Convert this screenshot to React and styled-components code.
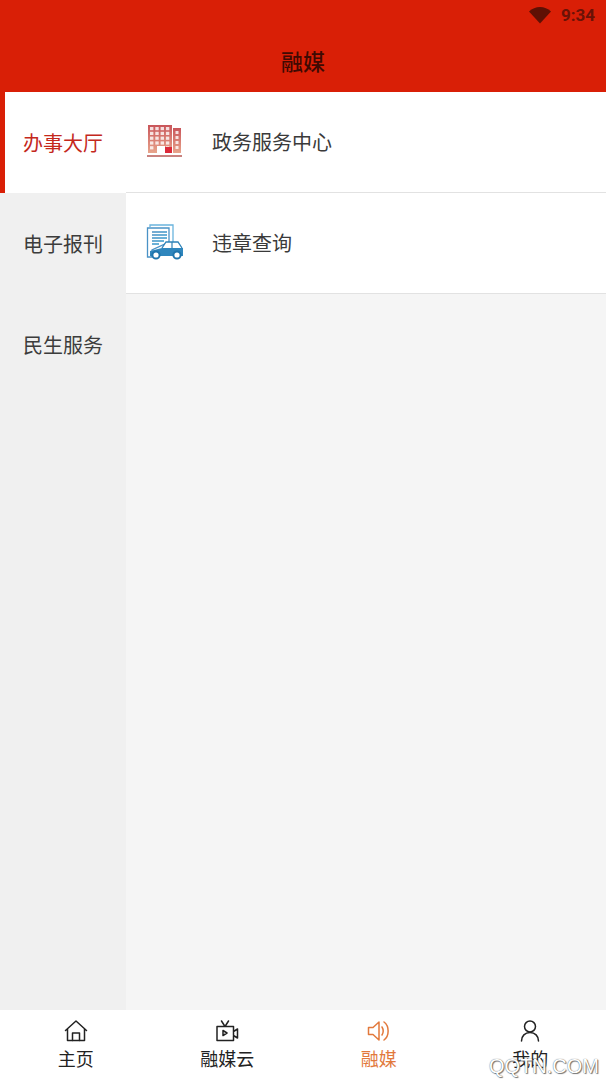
import React from "react";
import styled, { createGlobalStyle } from "styled-components";

const Global = createGlobalStyle`
  html, body { margin: 0; padding: 0; background: #f5f5f5; }
  body { font-family: "Liberation Sans", "Noto Sans CJK SC", sans-serif; }
`;
const Page = styled.div`
  position: relative; width: 606px; height: 1080px; display: flex; flex-direction: column; overflow: hidden;
`;
const Header = styled.header`
  height: 92px; flex: none; background: #d91f06; box-sizing: border-box;
  display: flex; flex-direction: column;
`;
const StatusBar = styled.div`
  height: 30px; display: flex; justify-content: flex-end; align-items: center; gap: 9px; padding-right: 11px;
  color: #6b1206; font-size: 17px; font-weight: 700; font-family: "Roboto", sans-serif;
`;
const Title = styled.h1`
  margin: 0; height: 60px; display: flex; align-items: center; justify-content: center;
  font-size: 22px; font-weight: 500; color: #3f0a03;
`;
const Body = styled.main`flex: 1; display: flex; min-height: 0;`;
const Side = styled.nav`width: 126px; flex: none; background: #f0f0f0; display: flex; flex-direction: column;`;
const SideItem = styled.div`
  height: 101px; box-sizing: border-box; display: flex; align-items: center; padding-left: ${p => p.$active ? "18px" : "23px"}; padding-bottom: 1px;
  font-size: 20px; color: ${p => p.$active ? "#c4281c" : "#3c3c3c"};
  background: ${p => p.$active ? "#fff" : "transparent"};
  border-left: ${p => p.$active ? "5px solid #d91f06" : "0"};
`;
const List = styled.section`flex: 1; background: #f5f5f5; display: flex; flex-direction: column;`;
const Row = styled.div`
  height: 101px; box-sizing: border-box; background: #fff; border-bottom: 1px solid #e2e2e2;
  display: flex; align-items: center; gap: 27px; padding-left: 20px; padding-bottom: 1px; font-size: 20px; color: #3a3a3a;
`;
const RowIcon = styled.svg`width: 39px; height: 40px; flex: none;`;
const TabBar = styled.footer`height: 70px; flex: none; background: #fff; display: grid; grid-template-columns: repeat(4, 1fr);`;
const Tab = styled.div`
  display: flex; flex-direction: column; align-items: center; padding-top: 9px; box-sizing: border-box;
  color: ${p => p.$active ? "#e2793c" : "#222"}; font-size: 18px; line-height: 24px; gap: 5px;
`;
const TabIcon = styled.svg`
  width: 24px; height: 24px; fill: none; stroke: currentColor; stroke-width: 1.5; stroke-linejoin: round; stroke-linecap: round;
`;
const Watermark = styled.div`
  position: absolute; right: 7px; bottom: 2px; font-family: "Liberation Sans", sans-serif; font-size: 20px; letter-spacing: 0;
  color: #fff; text-shadow: 0 0 1px #444, 1px 1px 1px #777; pointer-events: none;
`;

const Building = () => (
  <RowIcon viewBox="0 0 39 40">
    <defs>
      <linearGradient id="bg" x1="0" y1="0" x2="0" y2="1">
        <stop offset="0" stopColor="#c9555a" /><stop offset="1" stopColor="#e8a58c" />
      </linearGradient>
    </defs>
    <rect x="2" y="3" width="24" height="28" fill="url(#bg)" />
    <rect x="27" y="6" width="8" height="25" fill="url(#bg)" />
    {[0, 1, 2, 3, 4].map(r => [0, 1, 2, 3].map(c => (
      (r < 4 || c === 0 || c === 3) && <rect key={r + "-" + c} x={4 + c * 5.3} y={5 + r * 4.8} width="3.4" height="3.2" fill="#fff" fillOpacity=".8" />
    )))}
    {[0, 1, 2, 3].map(r => <rect key={r} x="29.500" y={9 + r * 5} width="3" height="3" fill="#fff" fillOpacity=".8" />)}
    <path d="M11 31v-7h8v7z" fill="#fff" />
    <rect x="19" y="25" width="7" height="6" fill="#dc2a3a" />
    <rect x="1" y="33" width="35" height="2" fill="#c9827f" />
  </RowIcon>
);
const CarDoc = () => (
  <RowIcon viewBox="0 0 39 40">
    <defs>
      <linearGradient id="cg" x1="0" y1="0" x2="1" y2="1">
        <stop offset="0" stopColor="#4a8fc2" /><stop offset="1" stopColor="#2e9ccf" />
      </linearGradient>
    </defs>
    <path d="M4 4V2h23v17" fill="none" stroke="#6ab4dd" strokeWidth="1.3" />
    <path d="M1.500 5H23v14l-17 8v7H1.500z" fill="#fff" stroke="#4a92c6" strokeWidth="1.3" />
    <path d="M6 9h15M6 12h15M6 15h15M6 18h12M6 21h7" stroke="url(#cg)" strokeWidth="1.7" />
    <path d="M16 25l4-6h12l4 6" fill="#fff" stroke="#2f83b8" strokeWidth="1.3" />
    <path d="M26 19v6" stroke="#2f83b8" strokeWidth="1.2" />
    <path d="M4 33v-5l12-3h21v8z" fill="#2f86bd" />
    <circle cx="10" cy="32" r="3.6" fill="#fff" stroke="#1f75ad" strokeWidth="2" />
    <circle cx="31" cy="32" r="3.6" fill="#fff" stroke="#1f75ad" strokeWidth="2" />
  </RowIcon>
);

export default function App() {
  return (
    <Page>
      <Global />
      <Header>
        <StatusBar>
          <svg width="24" height="18" viewBox="0 0 24 18"><path d="M1 5.500C4 2.500 8 1 12 1s8 1.500 11 4.500L12 17.500z" fill="#5e1004" /></svg>
          <span>9:34</span>
        </StatusBar>
        <Title>融媒</Title>
      </Header>
      <Body>
        <Side>
          <SideItem $active>办事大厅</SideItem>
          <SideItem>电子报刊</SideItem>
          <SideItem>民生服务</SideItem>
        </Side>
        <List>
          <Row><Building />政务服务中心</Row>
          <Row><CarDoc />违章查询</Row>
        </List>
      </Body>
      <TabBar>
        <Tab>
          <TabIcon viewBox="0 0 24 24"><path d="M1.500 11.500 12 2l10.500 9.500M3.500 10v11.500h17V10" /><path d="M8.500 21.500v-7.500h7v7.500" /></TabIcon>
          主页
        </Tab>
        <Tab>
          <TabIcon viewBox="0 0 24 24"><path d="M2 7.500h16.500v14H2zM18.500 12.500l4-2.500v9l-4-2.500M6.500 2l3.500 5.500L13.500 2" /><path d="M8 11.500l4 2.500-4 2.500z" /></TabIcon>
          融媒云
        </Tab>
        <Tab $active>
          <TabIcon viewBox="0 0 24 24"><path d="M1.500 8.500h4.500L12 3v18l-6-5.500H1.500zM15 8c1.500 2.500 1.500 5.500 0 8M17 3c5.500 4 5.500 14 0 18" /></TabIcon>
          融媒
        </Tab>
        <Tab>
          <TabIcon viewBox="0 0 24 24" strokeWidth="2"><circle cx="12" cy="7.500" r="5.500" /><path d="M3.500 22c0-5 3.500-8.500 8.500-8.500s8.500 3.500 8.500 8.500" /></TabIcon>
          我的
        </Tab>
      </TabBar>
      <Watermark>QQTN.COM</Watermark>
    </Page>
  );
}
